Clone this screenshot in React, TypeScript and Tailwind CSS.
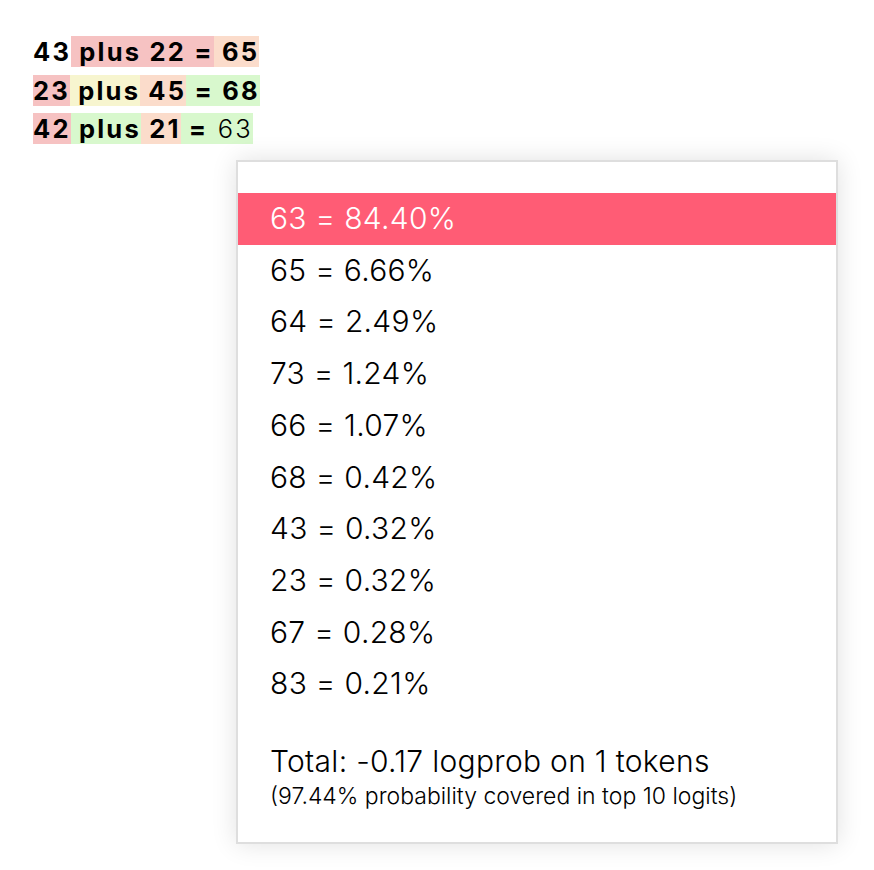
import React from "react";

const PINK = "bg-[#f6c2c2]";
const PEACH = "bg-[#fbdccb]";
const YELLOW = "bg-[#f7f5cf]";
const GREEN = "bg-[#d8f8cd]";

type Tok = { t: string; c: string; light?: boolean };

const lines: Tok[][] = [
  [
    { t: "43", c: "" },
    { t: " plus", c: PINK },
    { t: " 22", c: PINK },
    { t: " =", c: PINK },
    { t: " 65", c: PEACH },
  ],
  [
    { t: "23", c: PINK },
    { t: " plus", c: YELLOW },
    { t: " 45", c: PEACH },
    { t: " =", c: GREEN },
    { t: " 68", c: GREEN },
  ],
  [
    { t: "42", c: PINK },
    { t: " plus", c: GREEN },
    { t: " 21", c: PEACH },
    { t: " =", c: GREEN },
    { t: " 63", c: GREEN, light: true },
  ],
];

const probs = [
  "63 = 84.40%",
  "65 = 6.66%",
  "64 = 2.49%",
  "73 = 1.24%",
  "66 = 1.07%",
  "68 = 0.42%",
  "43 = 0.32%",
  "23 = 0.32%",
  "67 = 0.28%",
  "83 = 0.21%",
];

export default function App() {
  return (
    <div
      className="relative w-[874px] h-[870px] bg-white text-black"
      style={{ fontFamily: "Inter, 'Noto Sans', sans-serif" }}
    >
      <div className="pt-[33px] pl-[33px] text-[25.5px] leading-[38.6px] font-bold tracking-[2.2px]">
        {lines.map((line, i) => (
          <div key={i} className="whitespace-pre">
            {line.map((tok, j) => (
              <span key={j} className={`${tok.c} ${tok.light ? "font-light" : ""}`}>
                {tok.t}
              </span>
            ))}
          </div>
        ))}
      </div>

      <div className="absolute left-[236px] top-[160px] w-[602px] h-[684px] bg-white border-2 border-[#dedede] shadow-[0_0_24px_rgba(0,0,0,0.12)] pt-[31px]">
        {probs.map((p, i) => (
          <div
            key={i}
            className={`pl-[32px] text-[30px] leading-[51.7px] font-light tracking-[0.3px] ${
              i === 0 ? "bg-[#ff5c75] text-white" : "text-black"
            }`}
          >
            {p}
          </div>
        ))}
        <div className="pl-[32px] mt-[33px] text-[30px] leading-[36px] font-light tracking-[0.3px]">
          Total: -0.17 logprob on 1 tokens
        </div>
        <div className="pl-[32px] text-[23px] leading-[34px] font-light">
          (97.44% probability covered in top 10 logits)
        </div>
      </div>
    </div>
  );
}
